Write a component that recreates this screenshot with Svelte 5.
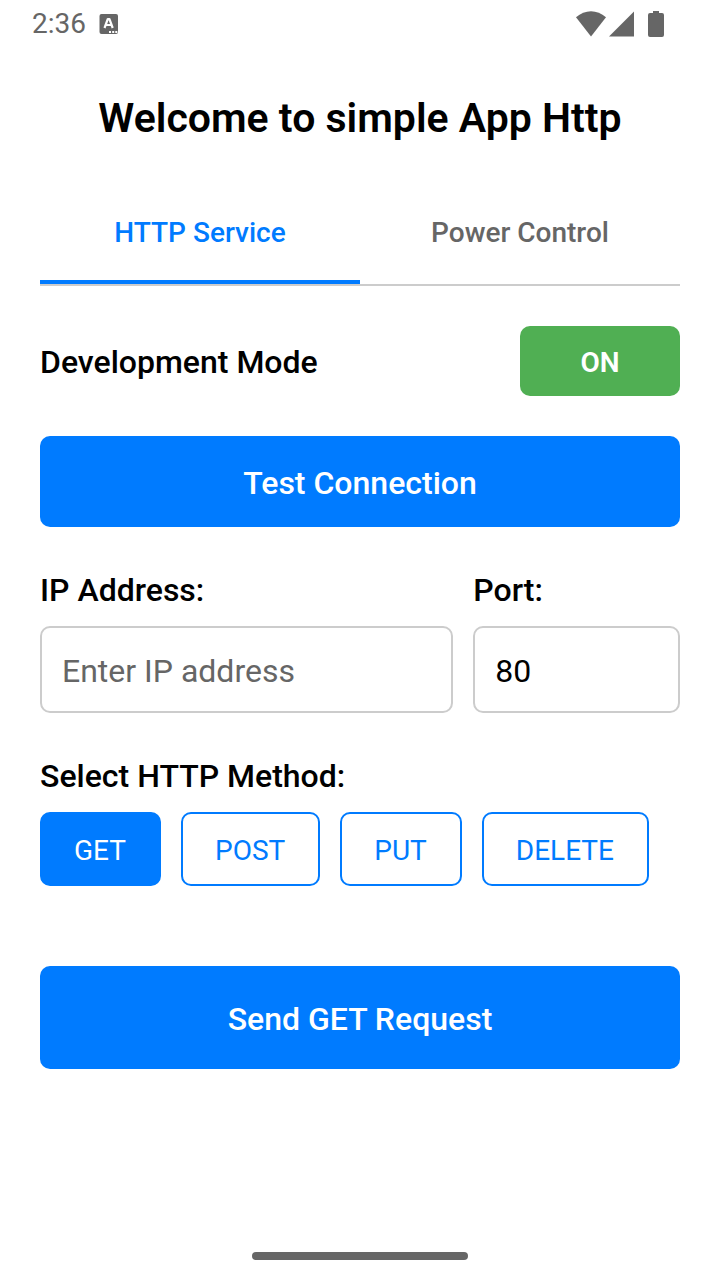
<script>
  const methods = ['GET', 'POST', 'PUT', 'DELETE'];
  let tab = $state('http');
  let devMode = $state(true);
  let method = $state('GET');
  let ip = $state('');
  let port = $state('80');
</script>

<div class="screen">
  <header class="status">
    <span class="clock">2:36</span>
    <svg class="note" width="20" height="20" viewBox="0 0 20 20" aria-hidden="true">
      <rect x="0.500" y="0" width="18.500" height="20" rx="2" fill="#666" />
      <path d="M5.500 14 8.800 5h1.600l3.300 9M7 11h5.200" fill="none" stroke="#fff" stroke-width="2.200" stroke-linejoin="round" />
      <path d="M10 18h2M13.200 18h2M16.300 18h2" stroke="#fff" stroke-width="1.800" />
    </svg>
    <svg class="signals" width="90" height="28" viewBox="0 0 90 28" fill="#666" aria-hidden="true">
      <path d="M0 7.300C9-.8 21-.8 30 7.300L15 26.500Z" />
      <path d="M58 1.500V26.500H33Z" />
      <path d="M77 1h6v2h3q2 0 2 2v20q0 2-2 2H74q-2 0-2-2V5q0-2 2-2h3Z" />
    </svg>
  </header>

  <main>
    <h1>Welcome to simple App Http</h1>
    <nav>
      <button class:active={tab === 'http'} onclick={() => (tab = 'http')}>HTTP Service</button>
      <button class:active={tab === 'power'} onclick={() => (tab = 'power')}>Power Control</button>
    </nav>
    <div class="mode">
      <span id="mode-label">Development Mode</span>
      <button class="toggle" class:off={!devMode} aria-labelledby="mode-label" aria-pressed={devMode} onclick={() => (devMode = !devMode)}>{devMode ? 'ON' : 'OFF'}</button>
    </div>
    <button class="primary test">Test Connection</button>
    <div class="fields">
      <div class="field">
        <label for="ip">IP Address:</label>
        <input id="ip" placeholder="Enter IP address" bind:value={ip} />
      </div>
      <div class="field">
        <label for="port">Port:</label>
        <input id="port" inputmode="numeric" bind:value={port} />
      </div>
    </div>
    <section>
      <h2>Select HTTP Method:</h2>
      <div class="methods">
        {#each methods as m}
          <button class:chosen={method === m} onclick={() => (method = m)}>{m}</button>
        {/each}
      </div>
    </section>
    <button class="primary send">Send {method} Request</button>
  </main>
  <footer><div class="handle"></div></footer>
</div>

<style>
  :global(body) { background: #fff; }
  .screen {
    box-sizing: border-box;
    min-height: 100vh;
    display: flex;
    flex-direction: column;
    font-family: Roboto, sans-serif;
    color: #000;
  }
  button, input { font-family: inherit; margin: 0; }
  button { cursor: pointer; border: 0; }
  .status {
    display: flex;
    align-items: center;
    height: 48px;
    padding: 0 54px 0 32px;
    color: #666;
  }
  .clock { font-size: 28px; line-height: 32px; }
  .note { margin-left: 13px; }
  .signals { margin-left: auto; }
  main { flex: 1; padding: 40px 40px 0; }
  h1 { margin: 0; font-size: 41px; line-height: 60px; font-weight: 600; text-align: center; }
  nav { display: flex; margin-top: 32px; border-bottom: 2px solid #ccc; }
  nav button {
    flex: 1;
    height: 104px;
    padding: 4px 0 0;
    background: none;
    color: #666;
    border-bottom: 4px solid transparent;
    font-size: 28px;
    font-weight: 500;
  }
  nav button.active { color: #007bff; border-bottom-color: #007bff; }
  .mode {
    display: flex;
    align-items: center;
    justify-content: space-between;
    margin-top: 40px;
    font-size: 32px;
    line-height: 40px;
    font-weight: 500;
  }
  .mode span { padding-top: 2px; }
  .toggle {
    width: 160px;
    height: 70px;
    padding: 2px 0 0;
    border-radius: 10px;
    background: #50af53;
    color: #fff;
    font-size: 28px;
    font-weight: 600;
  }
  .toggle.off { background: #999; }
  .primary {
    display: block;
    width: 100%;
    border-radius: 10px;
    background: #007bff;
    color: #fff;
    font-size: 32px;
    line-height: 38px;
    font-weight: 500;
  }
  .test { margin-top: 40px; padding: 28px 0 25px; }
  .fields { display: grid; grid-template-columns: 2fr 1fr; gap: 20px; margin-top: 43px; }
  label, h2 { display: block; margin: 0 0 16px; font-size: 32px; line-height: 40px; font-weight: 500; }
  input {
    box-sizing: border-box;
    width: 100%;
    height: 87px;
    padding: 2px 20px 0;
    border: 2px solid #ccc;
    border-radius: 10px;
    background: #fff;
    color: #000;
    font-size: 32px;
  }
  input::placeholder { color: #666; opacity: 1; }
  section { margin-top: 43px; }
  .methods { display: flex; flex-wrap: wrap; gap: 20px; }
  .methods button {
    height: 74px;
    padding: 2px 33px 0 32px;
    border: 2px solid #007bff;
    border-radius: 10px;
    background: #fff;
    color: #007bff;
    font-size: 28px;
  }
  .methods .chosen { background: #007bff; color: #fff; }
  .send { margin-top: 80px; padding: 34px 0 31px; }
  footer { display: flex; justify-content: center; padding: 20px 0; }
  .handle { width: 30%; height: 8px; border-radius: 4px; background: #666; }
</style>
